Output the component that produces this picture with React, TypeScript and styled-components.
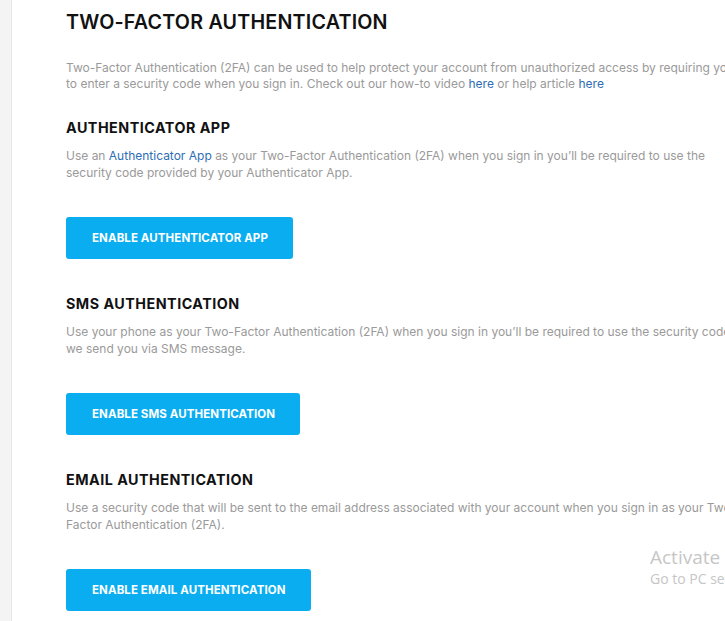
import React from "react";
import styled, { createGlobalStyle } from "styled-components";

const Global = createGlobalStyle`
  html, body { margin: 0; padding: 0; background: #ffffff; overflow: hidden; }
  body { font-family: "Inter", "Liberation Sans", sans-serif; }
`;

const Page = styled.div`
  display: flex;
  width: 725px;
  height: 621px;
  overflow: hidden;
  position: relative;
`;

const SideStrip = styled.div`
  flex: 0 0 11px;
  background: #f4f4f4;
  border-right: 1px solid #e6e6e6;
`;

const Content = styled.main`
  flex: 0 0 auto;
  width: 760px;
  padding: 9px 0 0 54px;
  box-sizing: border-box;
`;

const Title = styled.h1`
  margin: 0;
  font-size: 19.7px;
  font-weight: 600;
  color: #111;
  letter-spacing: 0.2px;
  line-height: 26px;
`;

const Text = styled.p`
  margin: 0;
  font-size: 12px;
  line-height: 16.5px;
  color: #9a9a9a;
  white-space: nowrap;
`;

const Intro = styled(Text)`
  margin-top: 25px;
  line-height: 16px;
`;

const Link = styled.a`
  color: #2e6db4;
  text-decoration: none;
`;

const Section = styled.section<{ $top: number }>`
  margin-top: ${(p) => p.$top}px;
  display: flex;
  flex-direction: column;
  align-items: flex-start;
`;

const Heading = styled.h2`
  margin: 0 0 10px;
  font-size: 14.3px;
  font-weight: 700;
  color: #111;
  letter-spacing: 0.5px;
  line-height: 20px;
`;

const Button = styled.button`
  margin-top: 36px;
  height: 42px;
  padding: 0 25px 0 26px;
  border: none;
  border-radius: 3px;
  background: #0aaef0;
  color: #fff;
  font-family: inherit;
  font-size: 11.5px;
  font-weight: 700;
  letter-spacing: 0.1px;
  cursor: pointer;
`;

const Watermark = styled.div`
  position: absolute;
  left: 650px;
  top: 544px;
  color: #c6c6c6;
  font-family: "Open Sans", "Noto Sans", sans-serif;
  white-space: nowrap;
`;

const WmBig = styled.div`
  font-size: 19px;
  line-height: 26px;
`;

const WmSmall = styled.div`
  font-size: 14px;
  line-height: 18px;
`;

export default function App() {
  return (
    <>
      <Global />
      <Page>
        <SideStrip />
        <Content>
          <Title>TWO-FACTOR AUTHENTICATION</Title>
          <Intro>
            Two-Factor Authentication (2FA) can be used to help protect your account from unauthorized access by requiring you
            <br />
            to enter a security code when you sign in. Check out our how-to video <Link href="#">here</Link> or help article{" "}
            <Link href="#">here</Link>
          </Intro>

          <Section $top={26}>
            <Heading>AUTHENTICATOR APP</Heading>
            <Text>
              Use an <Link href="#">Authenticator App</Link> as your Two-Factor Authentication (2FA) when you sign in you’ll be required to use the
              <br />
              security code provided by your Authenticator App.
            </Text>
            <Button>ENABLE AUTHENTICATOR APP</Button>
          </Section>

          <Section $top={35}>
            <Heading>SMS AUTHENTICATION</Heading>
            <Text>
              Use your phone as your Two-Factor Authentication (2FA) when you sign in you’ll be required to use the security code
              <br />
              we send you via SMS message.
            </Text>
            <Button>ENABLE SMS AUTHENTICATION</Button>
          </Section>

          <Section $top={35}>
            <Heading>EMAIL AUTHENTICATION</Heading>
            <Text>
              Use a security code that will be sent to the email address associated with your account when you sign in as your Two-
              <br />
              Factor Authentication (2FA).
            </Text>
            <Button>ENABLE EMAIL AUTHENTICATION</Button>
          </Section>
        </Content>
        <Watermark>
          <WmBig>Activate Windows</WmBig>
          <WmSmall>Go to PC settings to activate Windows.</WmSmall>
        </Watermark>
      </Page>
    </>
  );
}
